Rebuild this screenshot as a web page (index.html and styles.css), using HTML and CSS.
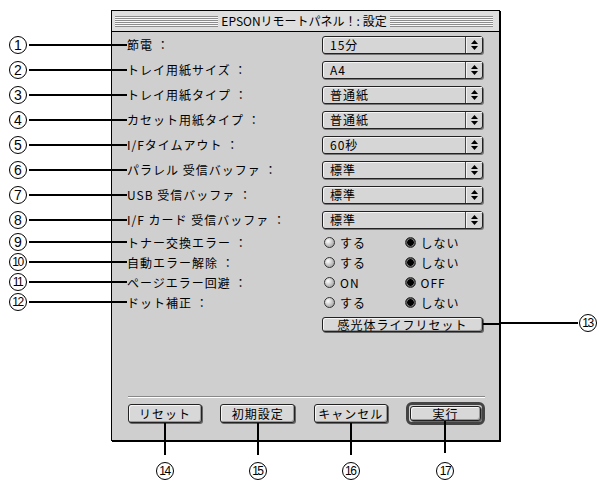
FILE: index.html
```html
<!DOCTYPE html>
<html lang="ja">
<head>
    <meta charset="UTF-8">
    <title>EPSONリモートパネル！: 設定</title>
    <link rel="stylesheet" href="styles.css">
</head>
<body>
<div class="page">
    <div class="notes-left">
        <div class="note-top"></div>
        <div class="note"><span class="num">1</span><span class="lead"></span></div>
        <div class="note"><span class="num">2</span><span class="lead"></span></div>
        <div class="note"><span class="num">3</span><span class="lead"></span></div>
        <div class="note"><span class="num">4</span><span class="lead"></span></div>
        <div class="note"><span class="num">5</span><span class="lead"></span></div>
        <div class="note"><span class="num">6</span><span class="lead"></span></div>
        <div class="note"><span class="num">7</span><span class="lead"></span></div>
        <div class="note"><span class="num">8</span><span class="lead"></span></div>
        <div class="note short"><span class="num">9</span><span class="lead"></span></div>
        <div class="note short"><span class="num two">10</span><span class="lead"></span></div>
        <div class="note short"><span class="num two">11</span><span class="lead"></span></div>
        <div class="note short"><span class="num two">12</span><span class="lead"></span></div>
    </div>

    <div class="window">
        <div class="titlebar">
            <span class="stripes"></span>
            <span class="title">EPSONリモートパネル！: 設定</span>
            <span class="stripes"></span>
        </div>

        <div class="settings">
            <div class="row">
                <span class="label">節電 ：</span>
                <div class="select"><span class="value">15分</span><span class="arrows"><svg width="7" height="10" viewBox="0 0 7 10"><path d="M3.5 0L7 4H0z M0 6H7L3.5 10z"/></svg></span></div>
            </div>
            <div class="row">
                <span class="label">トレイ用紙サイズ ：</span>
                <div class="select"><span class="value">A4</span><span class="arrows"><svg width="7" height="10" viewBox="0 0 7 10"><path d="M3.5 0L7 4H0z M0 6H7L3.5 10z"/></svg></span></div>
            </div>
            <div class="row">
                <span class="label">トレイ用紙タイプ ：</span>
                <div class="select"><span class="value">普通紙</span><span class="arrows"><svg width="7" height="10" viewBox="0 0 7 10"><path d="M3.5 0L7 4H0z M0 6H7L3.5 10z"/></svg></span></div>
            </div>
            <div class="row">
                <span class="label">カセット用紙タイプ ：</span>
                <div class="select"><span class="value">普通紙</span><span class="arrows"><svg width="7" height="10" viewBox="0 0 7 10"><path d="M3.5 0L7 4H0z M0 6H7L3.5 10z"/></svg></span></div>
            </div>
            <div class="row">
                <span class="label">I/Fタイムアウト ：</span>
                <div class="select"><span class="value">60秒</span><span class="arrows"><svg width="7" height="10" viewBox="0 0 7 10"><path d="M3.5 0L7 4H0z M0 6H7L3.5 10z"/></svg></span></div>
            </div>
            <div class="row">
                <span class="label">パラレル 受信バッファ ：</span>
                <div class="select"><span class="value">標準</span><span class="arrows"><svg width="7" height="10" viewBox="0 0 7 10"><path d="M3.5 0L7 4H0z M0 6H7L3.5 10z"/></svg></span></div>
            </div>
            <div class="row">
                <span class="label">USB 受信バッファ ：</span>
                <div class="select"><span class="value">標準</span><span class="arrows"><svg width="7" height="10" viewBox="0 0 7 10"><path d="M3.5 0L7 4H0z M0 6H7L3.5 10z"/></svg></span></div>
            </div>
            <div class="row">
                <span class="label">I/F カード 受信バッファ ：</span>
                <div class="select"><span class="value">標準</span><span class="arrows"><svg width="7" height="10" viewBox="0 0 7 10"><path d="M3.5 0L7 4H0z M0 6H7L3.5 10z"/></svg></span></div>
            </div>

            <div class="row short">
                <span class="label">トナー交換エラー ：</span>
                <div class="radios"><span class="radio">する</span><span class="radio on">しない</span></div>
            </div>
            <div class="row short">
                <span class="label">自動エラー解除 ：</span>
                <div class="radios"><span class="radio">する</span><span class="radio on">しない</span></div>
            </div>
            <div class="row short">
                <span class="label">ページエラー回避 ：</span>
                <div class="radios"><span class="radio">ON</span><span class="radio on">OFF</span></div>
            </div>
            <div class="row short">
                <span class="label">ドット補正 ：</span>
                <div class="radios"><span class="radio">する</span><span class="radio on">しない</span></div>
            </div>

            <div class="row action">
                <button class="btn btn-wide">感光体ライフリセット</button>
            </div>
        </div>

        <div class="footer">
            <div class="separator"></div>
            <div class="buttons">
                <button class="btn btn-note">リセット</button>
                <button class="btn btn-note btn-75">初期設定</button>
                <button class="btn btn-note">キャンセル</button>
                <span class="btn-default"><button class="btn btn-note">実行</button></span>
            </div>
        </div>
    </div>

    <div class="notes-right">
        <div class="note-side"><span class="lead"></span><span class="num two">13</span></div>
    </div>

    <div class="notes-bottom">
        <span class="cell"><span class="num two">14</span></span>
        <span class="cell cell-75"><span class="num two">15</span></span>
        <span class="cell"><span class="num two">16</span></span>
        <span class="cell cell-79"><span class="num two">17</span></span>
    </div>
</div>
</body>
</html>
```

FILE: styles.css
```css
body {
    margin: 0;
    background: #fff;
    color: #000;
    font-family: "Noto Sans CJK JP", "Noto Sans", sans-serif;
}

.page {
    display: grid;
    grid-template-columns: 111px 389px 99px;
    padding-top: 10px;
}

/* callouts */

.notes-left {
    grid-column: 1;
    grid-row: 1;
}

.note-top {
    height: 22px;
}

.note {
    display: flex;
    align-items: center;
    height: 25px;
}

.note.short {
    height: 20px;
}

.num {
    width: 18px;
    height: 18px;
    box-sizing: border-box;
    margin-left: 9px;
    display: flex;
    align-items: center;
    justify-content: center;
    border: 1px solid #000;
    border-radius: 50%;
    font-family: "Liberation Sans", sans-serif;
    font-size: 14px;
    line-height: 1;
}

.num.two {
    font-family: "Liberation Sans Narrow", "Liberation Sans", sans-serif;
    font-size: 12px;
    letter-spacing: -1.5px;
    text-indent: -1px;
}

.lead {
    flex: 1;
    height: 2px;
    margin-left: 2px;
    background: #000;
}

.notes-right {
    grid-column: 3;
    grid-row: 1;
    padding-top: 303px;
}

.note-side {
    display: flex;
    align-items: center;
    height: 20px;
}

.note-side .lead {
    margin-left: 0;
}

.note-side .num {
    margin-left: 1px;
    margin-right: 2px;
}

.notes-bottom {
    grid-column: 2;
    grid-row: 2;
    display: flex;
    justify-content: space-between;
    padding: 21px 15px 0 17px;
}

.cell {
    width: 74px;
    display: flex;
    justify-content: center;
}

.cell .num {
    margin-left: 0;
}

.cell-75 {
    width: 75px;
}

.cell-79 {
    width: 79px;
}

/* window */

.window {
    grid-column: 2;
    grid-row: 1;
    height: 431px;
    box-sizing: border-box;
    border: 1px solid #000;
    box-shadow: 1px 1px 0 #000;
    background: #cfcfcf;
    display: flex;
    flex-direction: column;
}

.titlebar {
    height: 20px;
    border-bottom: 1px solid #000;
    background: #dedede;
    display: flex;
    align-items: center;
    gap: 3px;
    padding: 0 6px 0 3px;
}

.stripes {
    flex: 1;
    height: 11px;
    background: repeating-linear-gradient(to bottom, #8c8c8c 0 1px, #f8f8f8 1px 2px);
}

.title {
    font-size: 12px;
    line-height: 20px;
}

.row {
    display: flex;
    align-items: center;
    height: 25px;
    padding-right: 16px;
}

.row.short {
    height: 20px;
}

.label {
    flex: 1;
    display: flex;
    align-items: center;
    font-size: 12px;
    letter-spacing: 1px;
    white-space: pre;
}

.label::before {
    content: "";
    width: 15px;
    height: 2px;
    background: #000;
}

.select {
    width: 161px;
    height: 18px;
    box-sizing: border-box;
    display: flex;
    border: 1px solid #222;
    border-radius: 3px;
    background: #d6d6d6;
    box-shadow: 1px 1px 0 #777, inset 1px 1px 0 #f4f4f4;
}

.value {
    flex: 1;
    padding-left: 7px;
    font-size: 12px;
    line-height: 16px;
    letter-spacing: 1px;
}

.arrows {
    width: 16px;
    display: flex;
    align-items: center;
    justify-content: center;
    border-left: 1px solid #444;
    box-shadow: inset 1px 1px 0 #f4f4f4;
}

.radios {
    width: 161px;
    display: flex;
}

.radio {
    width: 81px;
    display: flex;
    align-items: center;
    gap: 5px;
    padding-left: 2px;
    font-size: 12px;
    letter-spacing: 1px;
}

.radio::before {
    content: "";
    width: 11px;
    height: 11px;
    box-sizing: border-box;
    border: 1px solid #333;
    border-radius: 50%;
    background: radial-gradient(circle at 35% 35%, #fff, #8c8c8c);
}

.radio.on::before {
    background: radial-gradient(circle, #000 0 3px, #777 3.5px, #222 5px);
}

.row.action {
    height: auto;
    margin-top: 5px;
    justify-content: flex-end;
}

/* buttons */

.btn {
    position: relative;
    width: 74px;
    height: 19px;
    padding: 0;
    border: 1px solid #222;
    border-radius: 3px;
    background: #d8d8d8;
    box-shadow: inset 1px 1px 0 #f6f6f6, inset -1px -1px 0 #999, 1px 1px 0 #666;
    font-family: inherit;
    font-size: 12px;
    line-height: 17px;
    letter-spacing: 1px;
    color: #000;
}

.btn-75 {
    width: 75px;
}

.btn-wide {
    width: 161px;
    height: 15px;
    line-height: 13px;
}

.btn-wide::after {
    content: "";
    position: absolute;
    left: calc(100% + 1px);
    top: 5px;
    width: 18px;
    height: 2px;
    background: #000;
}

.btn-note::after {
    content: "";
    position: absolute;
    top: calc(100% + 1px);
    left: 50%;
    width: 2px;
    height: 32px;
    margin-left: -1px;
    background: #000;
}

.footer {
    margin-top: auto;
    padding: 0 14px 15px 16px;
}

.separator {
    border-top: 1px solid #888;
    border-bottom: 1px solid #fff;
    margin-bottom: 4px;
}

.buttons {
    display: flex;
    justify-content: space-between;
    align-items: center;
    height: 23px;
}

.btn-default {
    width: 79px;
    height: 23px;
    box-sizing: border-box;
    display: flex;
    padding: 1px;
    border: 3px solid #444;
    border-radius: 6px;
}

.btn-default .btn {
    width: 100%;
    height: 100%;
    line-height: 13px;
}
```
